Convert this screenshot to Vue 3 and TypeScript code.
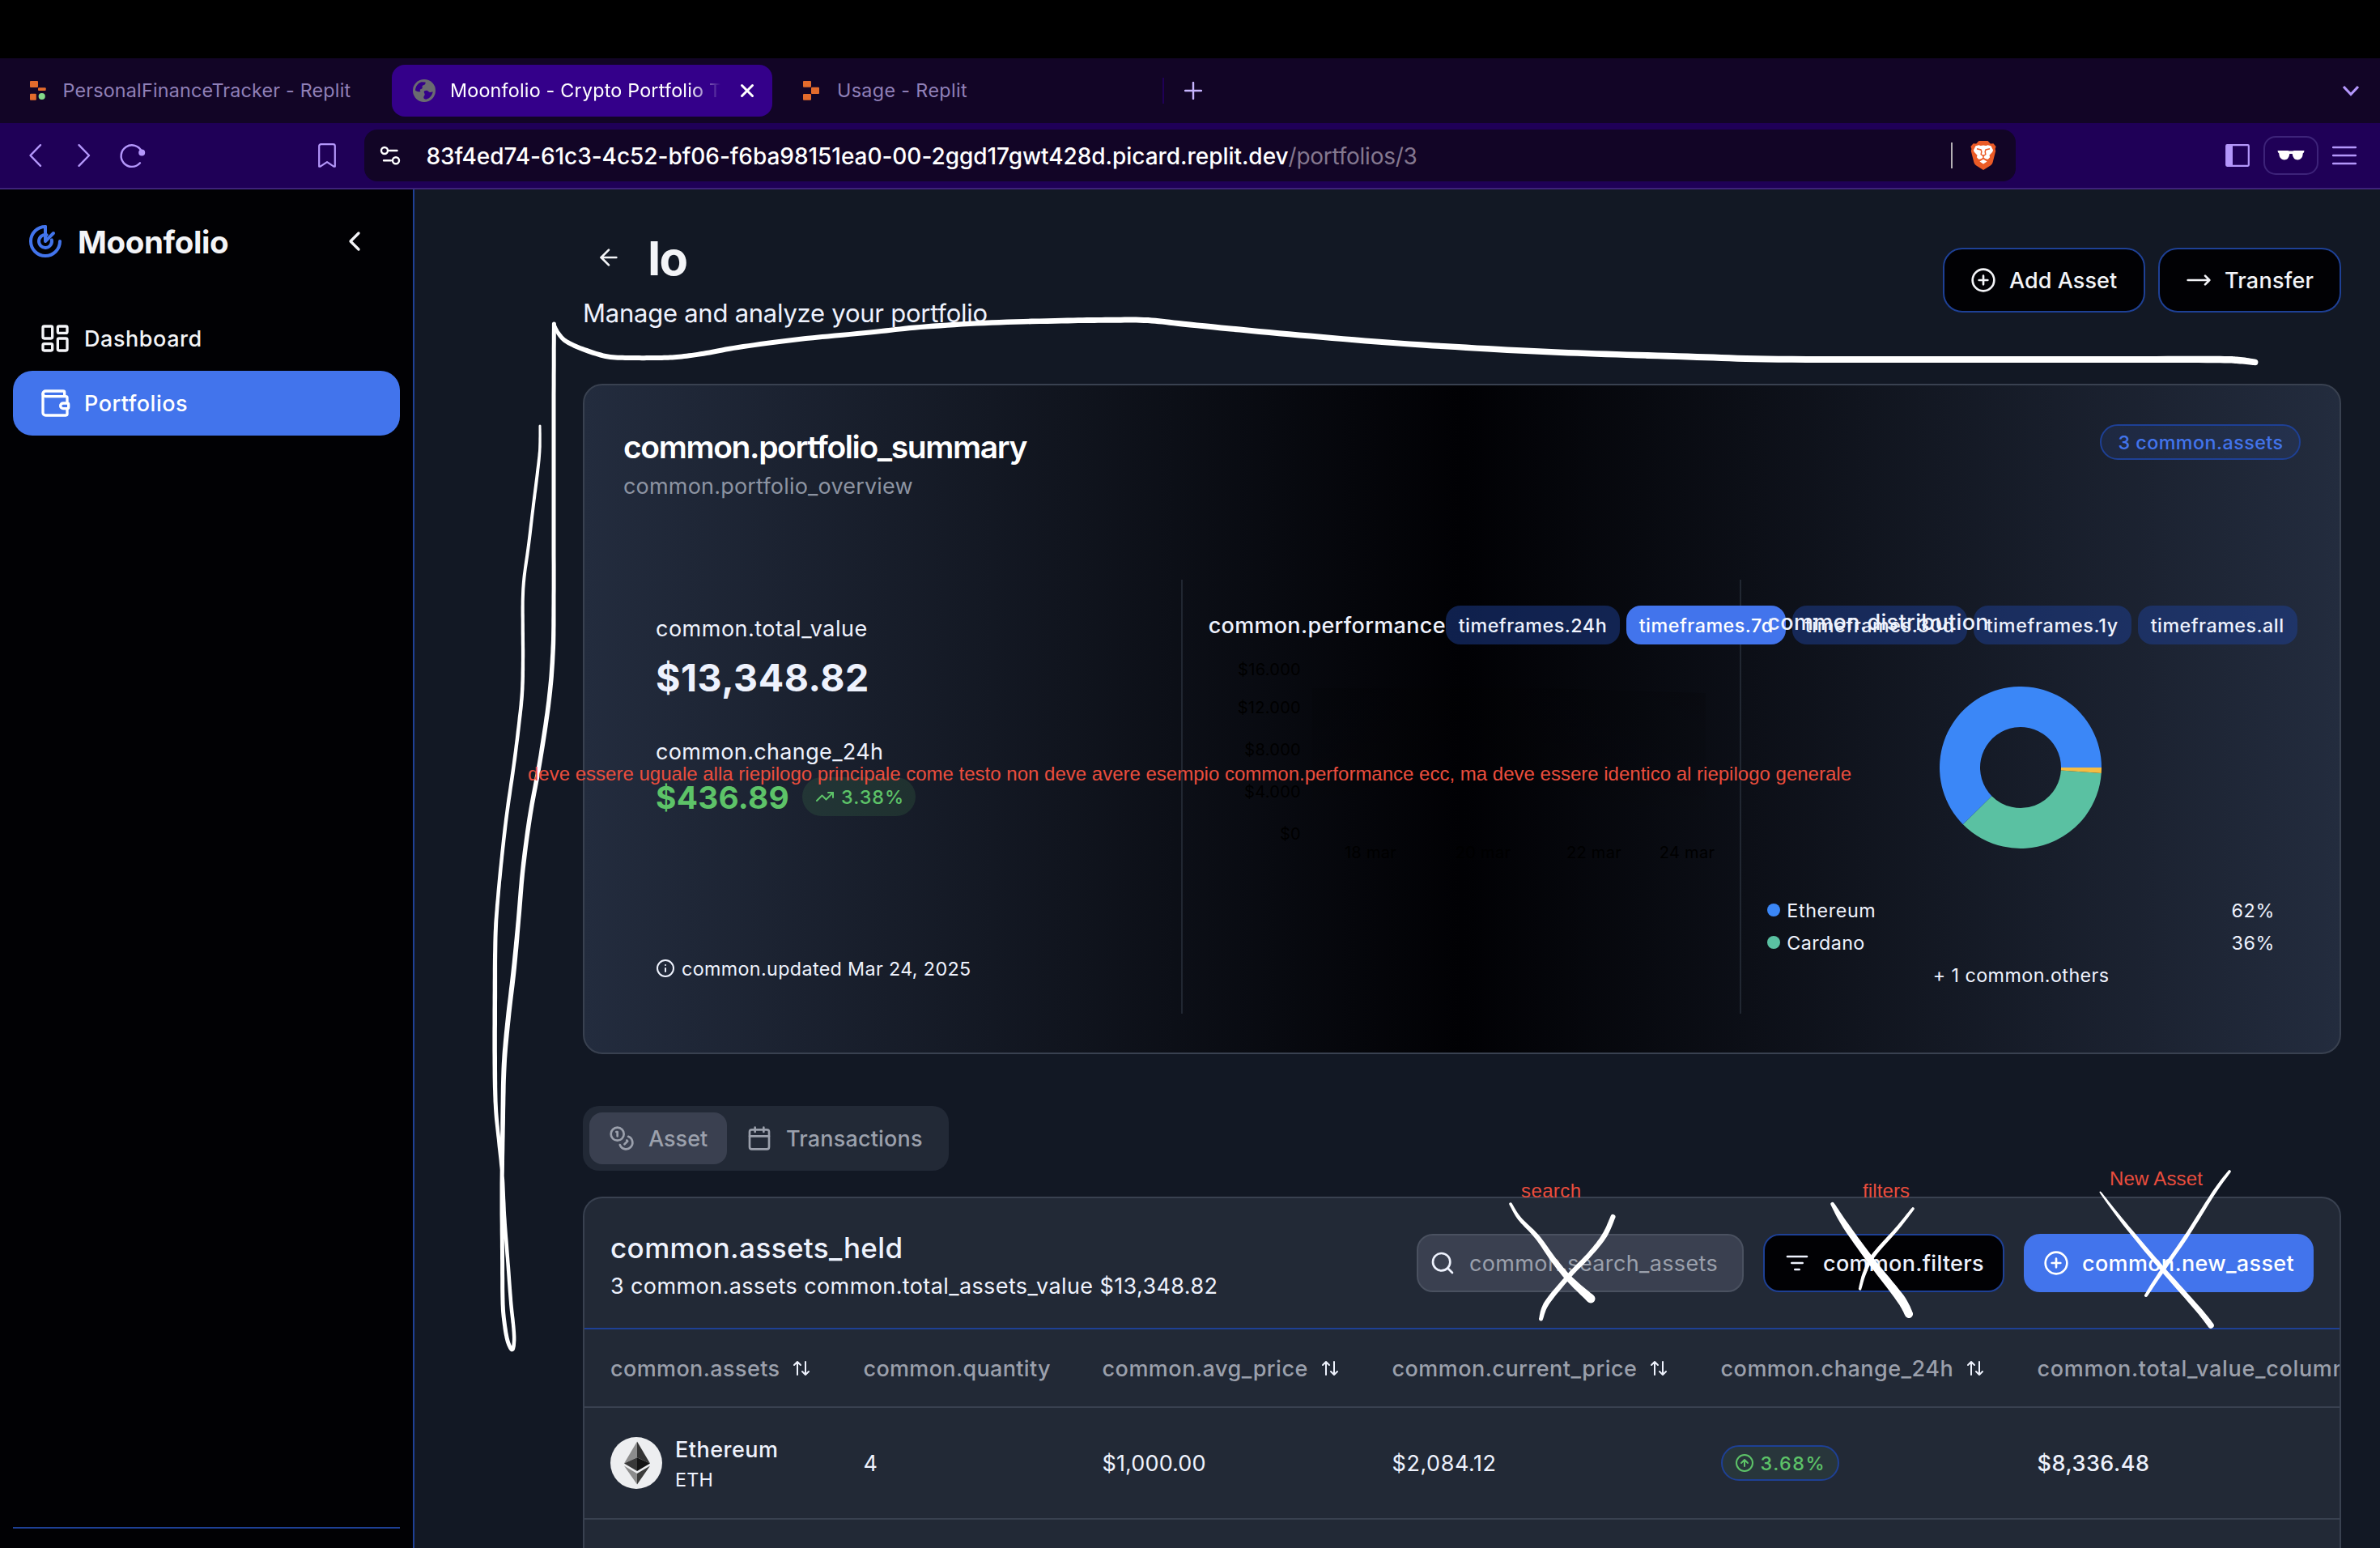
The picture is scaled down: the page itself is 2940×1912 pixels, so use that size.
<script setup lang="ts">
import type { Directive } from 'vue'

type StrokePoint = [x: number, y: number, width: number]

interface Slice {
  name: string
  share: number
  color: string
}

/* Tracks a line of text so that its glyphs span the given number of pixels. */
const vFit: Directive<HTMLElement, number> = {
  mounted(el, { value }) {
    const context = document.createElement('canvas').getContext('2d')
    const text = (el.textContent ?? '').trim()
    if (!context || text.length < 2) return
    const style = getComputedStyle(el)
    context.font = `${style.fontWeight} ${style.fontSize} ${style.fontFamily}`
    const box = context.measureText(text)
    const drawn = box.actualBoundingBoxLeft + box.actualBoundingBoxRight
    el.style.letterSpacing = `${((value - drawn) / (text.length - 1)).toFixed(3)}px`
  },
}

const timeframes = [
  { label: 'timeframes.24h', width: 215, text: 182, active: false },
  { label: 'timeframes.7d', width: 197, text: 164, active: true },
  { label: 'timeframes.30d', width: 216, text: 183, active: false },
  { label: 'timeframes.1y', width: 195, text: 162, active: false },
  { label: 'timeframes.all', width: 197, text: 163.5, active: false },
]

const valueTicks = [
  { label: '$16.000', y: 22 },
  { label: '$12.000', y: 69 },
  { label: '$8.000', y: 121 },
  { label: '$4.000', y: 173 },
  { label: '$0', y: 225 },
]
const dateTicks = [
  { label: '18 mar', x: 200 },
  { label: '20 mar', x: 339 },
  { label: '22 mar', x: 476 },
  { label: '24 mar', x: 591 },
]

const slices: Slice[] = [
  { name: 'Ethereum', share: 0.624, color: '#3b87f7' },
  { name: 'Cardano', share: 0.365, color: '#5ac1a2' },
  { name: 'Other', share: 0.011, color: '#f5bc42' },
]

/* Ring sectors, counter-clockwise from three o'clock. */
const sectors = slices.map((slice, i) => {
  const before = slices.slice(0, i).reduce((sum, s) => sum + s.share, 0)
  const from = before * Math.PI * 2
  const to = (before + slice.share) * Math.PI * 2
  const at = (r: number, a: number) =>
    `${(100 + r * Math.cos(a)).toFixed(2)} ${(100 - r * Math.sin(a)).toFixed(2)}`
  const large = to - from > Math.PI ? 1 : 0
  return {
    color: slice.color,
    d: `M${at(100, from)}A100 100 0 ${large} 0 ${at(100, to)}L${at(50, to)}A50 50 0 ${large} 1 ${at(50, from)}Z`,
  }
})

const legend = [
  { name: 'Ethereum', nameWidth: 106, share: '62%', color: '#3b87f7' },
  { name: 'Cardano', nameWidth: 94, share: '36%', color: '#5ac1a2' },
]

const columns = [
  { label: 'common.assets', width: 207.5, sortable: true },
  { label: 'common.quantity', width: 229.5, sortable: false },
  { label: 'common.avg_price', width: 252, sortable: true },
  { label: 'common.current_price', width: 300.5, sortable: true },
  { label: 'common.change_24h', width: 285, sortable: true },
  { label: 'common.total_value_column', width: 379, sortable: false },
]

/* Catmull-Rom resampling of a pen stroke, then an outline of varying width. */
function pen(points: StrokePoint[]): string {
  const line: StrokePoint[] = []
  const pick = (i: number) => points[Math.max(0, Math.min(points.length - 1, i))]
  for (let i = 0; i < points.length - 1; i++) {
    const [a, b, c, d] = [pick(i - 1), pick(i), pick(i + 1), pick(i + 2)]
    for (let k = 0; k < 10; k++) {
      const t = k / 10
      const mix = (n: 0 | 1 | 2) =>
        0.5 *
        (2 * b[n] +
          (c[n] - a[n]) * t +
          (2 * a[n] - 5 * b[n] + 4 * c[n] - d[n]) * t * t +
          (3 * b[n] - a[n] - 3 * c[n] + d[n]) * t * t * t)
      line.push([mix(0), mix(1), b[2] + (c[2] - b[2]) * t])
    }
  }
  line.push(points[points.length - 1])
  const left: string[] = []
  const right: string[] = []
  line.forEach(([x, y, w], i) => {
    const p = line[Math.max(0, i - 1)]
    const n = line[Math.min(line.length - 1, i + 1)]
    const length = Math.hypot(n[0] - p[0], n[1] - p[1]) || 1
    const nx = (-(n[1] - p[1]) / length) * (w / 2)
    const ny = ((n[0] - p[0]) / length) * (w / 2)
    left.push(`${(x + nx).toFixed(1)} ${(y + ny).toFixed(1)}`)
    right.unshift(`${(x - nx).toFixed(1)} ${(y - ny).toFixed(1)}`)
  })
  const endR = points[points.length - 1][2] / 2
  const startR = points[0][2] / 2
  return `M${left.join('L')}A${endR} ${endR} 0 0 0 ${right.join('L')}A${startR} ${startR} 0 0 0 ${left[0]}Z`
}

const penStrokes = [
  pen([
    [684, 400, 4], [690, 412, 5], [700, 422, 5.5], [722, 432, 6], [751, 440.5, 6], [781, 442, 6], [810, 442, 6],
    [836, 441, 6], [869, 436.7, 6], [912, 429, 6], [987, 419, 6], [1075, 410.5, 6], [1137, 404, 6.3], [1225, 398.5, 6.5],
    [1319, 396, 6.8], [1370, 395.3, 7], [1418, 395.6, 7], [1470, 401, 7], [1580, 411.7, 7], [1714, 423, 7], [1850, 431.5, 7.5],
    [1960, 436.5, 7.5], [2085, 440.5, 8], [2197, 443.7, 8], [2400, 444, 8], [2600, 444, 8], [2735, 444, 8.5], [2765, 445, 8.5], [2786, 447.5, 7.5],
  ]),
  pen([
    [684.4, 400, 5], [684, 500, 5], [684, 640, 5], [684, 745, 5], [683, 806, 5.5], [678, 866, 5.5], [667, 940, 5.5], [655, 1006, 5.5],
    [646, 1073, 5.5], [640.5, 1136, 5.5], [635, 1195, 6], [627, 1265, 6], [622.5, 1320, 6], [621, 1395, 5.5],
    [620, 1478, 5], [620.5, 1546, 5], [621, 1607, 5], [623, 1633, 5], [627, 1656, 5], [632.5, 1667, 5],
    [635, 1658, 4.5], [634.5, 1641, 4.5], [631, 1607, 4.5], [627, 1554, 4.5], [623, 1501, 4.5], [620.5, 1452, 4.5],
    [616, 1407, 4.5], [612.5, 1369, 5], [611.3, 1320, 5.5], [611.3, 1240, 5.5], [612, 1158, 5], [615, 1110, 4.5], [620, 1058, 4.5],
    [626, 1006, 4.5], [635, 943, 4.5], [641, 895, 4.5], [645, 855, 4.5], [646, 815, 4.3], [645.8, 775, 4.2], [645.8, 740, 4], [647.5, 713, 4],
    [653, 673, 4], [659, 623, 4], [664, 583, 4], [666.8, 555, 3.5], [667, 526, 3],
  ]),
  pen([[1866, 1487, 3.5], [1877, 1505, 4.5], [1899, 1528, 6], [1919, 1556, 7], [1939, 1580, 8], [1965, 1604, 11]]),
  pen([[1992.5, 1503, 6], [1982, 1526, 6.5], [1964, 1549, 6], [1939, 1575, 6], [1911, 1609, 6.5], [1903.5, 1629, 5]]),
  pen([[2263.5, 1487, 4.5], [2280, 1514, 8], [2311, 1557, 9], [2347, 1603, 11], [2358, 1623, 10]]),
  pen([[2363, 1493, 3.5], [2343, 1518, 4.5], [2314, 1551, 5], [2303, 1573, 4.5], [2297.6, 1592, 3.5]]),
  pen([[2594.5, 1472.5, 2], [2624, 1511, 4.5], [2671, 1567, 6], [2716, 1618, 7], [2731, 1637, 7.5]]),
  pen([[2754, 1447, 3.5], [2735.5, 1472, 4.5], [2700, 1528, 5], [2668.6, 1573, 5], [2651, 1600, 4]]),
]
</script>

<template>
  <div class="screen">
    <div class="menubar"></div>

    <div class="tabstrip">
      <div class="tab tab-first">
        <svg class="favicon" width="28" height="28" viewBox="0 0 28 28">
          <rect x="4" y="2" width="10" height="8" rx="1" fill="#e46b2c" />
          <rect x="14" y="10.2" width="9.7" height="3.8" rx="1" fill="#e46b2c" />
          <rect x="4" y="17.7" width="7.8" height="8" rx="1" fill="#e46b2c" />
          <circle cx="18.7" cy="21" r="4.1" fill="#84d98a" />
        </svg>
        <span v-fit="354">PersonalFinanceTracker - Replit</span>
      </div>
      <div class="tab tab-active">
        <svg class="favicon" width="28" height="28" viewBox="0 0 28 28">
          <circle cx="14" cy="14" r="14" fill="#6a6b70" />
          <path
            d="M3 13.5c.3-4.600 3-8.600 7.500-10.200l5 .2c.5 1.500-.2 2.800-1.800 3.600-2 .8-2.500 1.300-2 2.700.4 1.200-.4 2.200-2 2.400-1.200.2-1.200 1-.6 1.800.5.6.3 1.200-.6 1.300-2 .2-4.500-.5-5.500-1.800zM14 14.500c2-1.200 4.500-.8 5.500.8 1 1.300 3 .7 5.200 0-.8 4.700-4 8.300-8.200 9.400-2-.2-3.400-1-3.200-2.800.2-1.500 1.500-2 1.400-3.400-.1-1.400-1.700-2.600-.7-4z"
            fill="#34008a"
          />
        </svg>
        <div class="tab-title"><span v-fit="332">Moonfolio - Crypto Portfolio T</span></div>
        <svg class="close" width="18" height="18" viewBox="0 0 18 18">
          <path d="M2.500 2.500l13 13M15.500 2.500l-13 13" stroke="#fff" stroke-width="3" stroke-linecap="round" />
        </svg>
      </div>
      <div class="tab tab-usage">
        <svg class="favicon" width="28" height="28" viewBox="0 0 28 28">
          <rect x="4" y="2" width="10" height="7.800" rx="1" fill="#e46b2c" />
          <rect x="14" y="9.800" width="10" height="8.200" rx="1" fill="#e46b2c" />
          <rect x="4" y="18" width="10" height="7.800" rx="1" fill="#e46b2c" />
        </svg>
        <span v-fit="159">Usage - Replit</span>
      </div>
      <div class="tab-divider"></div>
      <svg class="plus" width="22" height="22" viewBox="0 0 22 22">
        <path d="M11 1v20M1 11h20" stroke="#c7b5ff" stroke-width="2.400" stroke-linecap="round" />
      </svg>
      <svg class="tab-chevron" width="24" height="16" viewBox="0 0 24 16">
        <path d="M3 3l9 9.500L21 3" fill="none" stroke="#b497fb" stroke-width="3.200" />
      </svg>
    </div>

    <div class="toolbar">
      <svg class="nav-icons" width="190" height="32" viewBox="0 0 190 32" fill="none" stroke="#b497fb" stroke-width="2.400" stroke-linecap="round" stroke-linejoin="round">
        <path d="M18 3.200L5.500 16 18 28.800" />
        <path d="M65.500 3.200L78 16 65.500 28.800" />
        <path d="M141 25.300A13.300 13.300 0 1 1 143 11" />
        <circle cx="143.200" cy="12.600" r="2.800" fill="#b497fb" />
      </svg>
      <svg class="bookmark" width="24" height="32" viewBox="0 0 24 32">
        <path d="M2.200 4.500a2.300 2.300 0 0 1 2.300-2.300h15a2.300 2.300 0 0 1 2.300 2.300v25.200h-1.500L12 24.200l-8.300 5.500H2.200z" fill="none" stroke="#b497fb" stroke-width="2.200" stroke-linejoin="round" />
      </svg>
      <div class="address">
        <svg width="26" height="26" viewBox="0 0 26 26" fill="none" stroke="#fff" stroke-width="2.400" stroke-linecap="round">
          <circle cx="6" cy="7" r="4" />
          <path d="M12 7h9.500M5 19.200h9" />
          <circle cx="20" cy="19.200" r="4" />
        </svg>
        <div class="url">
          <span class="url-host" v-fit="1064">83f4ed74-61c3-4c52-bf06-f6ba98151ea0-00-2ggd17gwt428d.picard.replit.dev</span><span class="url-path" v-fit="158">/portfolios/3</span>
        </div>
        <div class="address-rule"></div>
        <svg class="shield" width="32" height="36" viewBox="0 0 32 36">
          <path d="M10.500 0h11l3.300 3.500 3.600-.3L31.600 7 30.600 10 31.200 12.500 27.500 27q-.6 2-2.400 3.300L16 36l-9.100-5.700Q5.100 29 4.500 27L.8 12.500 1.400 10 .4 7l3.200-3.800 3.600.3z" fill="#eb5b26" />
          <path d="M10.500 5.300l2.200.6 3.300-.5 3.300.5 2.200-.6 4 1 2.600 5.200-.9 2.300-3.700 4 .6 2.500-2.300 2.500-3-.3-2.800-1.700-2.800 1.700-3 .3-2.300-2.500.6-2.500-3.700-4-.9-2.300L6.500 6.300z" fill="#fff" />
          <path d="M8 9.800l5 1.200.8 2.200-.6 3.500 2.800 1.800 2.800-1.800-.6-3.500.8-2.200 5-1.200" fill="none" stroke="#eb5b26" stroke-width="1.500" />
          <path d="M16 18.500v3M12.500 23.500l3.500-2 3.500 2" fill="none" stroke="#eb5b26" stroke-width="1.500" />
          <path d="M16 22.800l4.600 2.600-4.600 3.200-4.600-3.200z" fill="#fff" />
        </svg>
      </div>
      <svg class="panel" width="30" height="28" viewBox="0 0 30 28">
        <rect x="1.200" y="1.200" width="27.600" height="25.600" rx="1" fill="none" stroke="#b497fb" stroke-width="2.200" />
        <rect x="1" y="1" width="8" height="26" fill="#b497fb" />
      </svg>
      <div class="private">
        <svg width="34" height="14" viewBox="0 0 34 14">
          <path d="M.5 1h12.500q4 1 8 0H33.500l-.6 2.500-1 .6q-.6 8.300-6.400 8.400-6 0-6.800-7.400h-3.400Q14.500 12.500 8.500 12.500 2.700 12.400 2.100 4.100l-1-.6z" fill="#fff" />
        </svg>
      </div>
      <svg class="burger" width="30" height="24" viewBox="0 0 30 24">
        <path d="M1 2h28M1 12h28M1 22h28" stroke="#b497fb" stroke-width="2.400" stroke-linecap="round" />
      </svg>
    </div>

    <div class="app">
      <aside class="sidebar">
        <div class="brand">
          <svg width="48" height="48" viewBox="0 0 24 24" fill="none" stroke="#4274ec" stroke-width="2" stroke-linecap="round" stroke-linejoin="round">
            <path d="M12 3a9 9 0 1 0 9 9" />
            <path d="M12.800 8.080a4 4 0 1 0 3.120 3.120" />
            <path d="M12 3v9l5-5" />
          </svg>
          <span class="brand-name" v-fit="184">Moonfolio</span>
          <svg class="icon collapse" width="40" height="40" viewBox="0 0 24 24"><path d="m15 18-6-6 6-6" /></svg>
        </div>
        <nav>
          <div class="nav-item">
            <svg class="icon" width="40" height="40" viewBox="0 0 24 24">
              <rect width="7" height="9" x="3" y="3" rx="1" />
              <rect width="7" height="5" x="14" y="3" rx="1" />
              <rect width="7" height="9" x="14" y="12" rx="1" />
              <rect width="7" height="5" x="3" y="16" rx="1" />
            </svg>
            <span v-fit="141.500">Dashboard</span>
          </div>
          <div class="nav-item selected">
            <svg class="icon" width="40" height="40" viewBox="0 0 24 24">
              <path d="M19 7V4a1 1 0 0 0-1-1H5a2 2 0 0 0 0 4h15a1 1 0 0 1 1 1v4h-3a2 2 0 0 0 0 4h3a1 1 0 0 0 1-1v-2a1 1 0 0 0-1-1" />
              <path d="M3 5v14a2 2 0 0 0 2 2h15a1 1 0 0 0 1-1v-4" />
            </svg>
            <span v-fit="125">Portfolios</span>
          </div>
        </nav>
        <div class="sidebar-rule"></div>
      </aside>

      <main>
        <header class="page-head">
          <div>
            <div class="title-row">
              <svg class="icon" width="32" height="32" viewBox="0 0 24 24"><path d="m12 19-7-7 7-7" /><path d="M19 12H5" /></svg>
              <h1 v-fit="45.500">Io</h1>
            </div>
            <p class="subtitle"><span v-fit="496.500">Manage and analyze your portfolio</span></p>
          </div>
          <div class="actions">
            <button class="outline add">
              <svg class="icon" width="32" height="32" viewBox="0 0 24 24"><circle cx="12" cy="12" r="10" /><path d="M8 12h8M12 8v8" /></svg>
              <span v-fit="133">Add Asset</span>
            </button>
            <button class="outline transfer">
              <svg class="icon" width="32" height="32" viewBox="0 0 24 24"><path d="M18 8l4 4-4 4M2 12h20" /></svg>
              <span v-fit="108.500">Transfer</span>
            </button>
          </div>
        </header>

        <section class="summary">
          <div class="summary-head">
            <div>
              <h2><span v-fit="498.500">common.portfolio_summary</span></h2>
              <p><span v-fit="356.500">common.portfolio_overview</span></p>
            </div>
            <div class="asset-count"><span v-fit="202">3 common.assets</span></div>
          </div>

          <div class="summary-body">
            <div class="col totals">
              <p class="label"><span v-fit="259.500">common.total_value</span></p>
              <p class="total"><span v-fit="260">$13,348.82</span></p>
              <p class="label change-label"><span v-fit="278">common.change_24h</span></p>
              <div class="change">
                <span class="change-value" v-fit="162.500">$436.89</span>
                <div class="change-pill">
                  <svg class="icon" width="24" height="24" viewBox="0 0 24 24"><path d="M22 7l-8.500 8.500-5-5L2 17" /><path d="M16 7h6v6" /></svg>
                  <span v-fit="74">3.38%</span>
                </div>
              </div>
              <p class="updated">
                <svg class="icon" width="24" height="24" viewBox="0 0 24 24"><circle cx="12" cy="12" r="10" /><path d="M12 16v-4M12 8h.01" /></svg>
                <span v-fit="355">common.updated Mar 24, 2025</span>
              </p>
            </div>

            <div class="col performance">
              <div class="performance-head">
                <span class="col-title" v-fit="291">common.performance</span>
                <div
                  v-for="frame in timeframes"
                  :key="frame.label"
                  class="frame"
                  :class="{ active: frame.active }"
                  :style="{ width: frame.width + 'px' }"
                ><span v-fit="frame.text">{{ frame.label }}</span></div>
              </div>
              <svg class="chart" width="626" height="260" viewBox="0 0 626 260">
                <defs>
                  <linearGradient id="area" x1="0" y1="0" x2="0" y2="1">
                    <stop offset="0" stop-color="#000" stop-opacity=".16" />
                    <stop offset="1" stop-color="#000" stop-opacity="0" />
                  </linearGradient>
                </defs>
                <path d="M128 38L420 38 614 44V218H128Z" fill="url(#area)" />
                <text v-for="tick in valueTicks" :key="tick.label" x="114" :y="tick.y" text-anchor="end">{{ tick.label }}</text>
                <text v-for="tick in dateTicks" :key="tick.label" :x="tick.x" y="248" text-anchor="middle">{{ tick.label }}</text>
              </svg>
            </div>

            <div class="col distribution">
              <p class="col-title"><span v-fit="271">common.distribution</span></p>
              <svg class="donut" width="200" height="200" viewBox="0 0 200 200">
                <path v-for="sector in sectors" :key="sector.color" :d="sector.d" :fill="sector.color" />
              </svg>
              <div class="legend">
                <div v-for="entry in legend" :key="entry.name" class="legend-row">
                  <i :style="{ background: entry.color }"></i>
                  <span v-fit="entry.nameWidth">{{ entry.name }}</span>
                  <span class="share" v-fit="50">{{ entry.share }}</span>
                </div>
                <div class="legend-row others"><span v-fit="215">+ 1 common.others</span></div>
              </div>
            </div>
          </div>
        </section>

        <div class="tabs">
          <div class="tabs-item on">
            <svg class="icon" width="32" height="32" viewBox="0 0 24 24">
              <circle cx="8" cy="8" r="6" />
              <path d="M18.090 10.370A6 6 0 1 1 10.340 18" />
              <path d="M7 6h1v4" />
              <path d="m16.710 13.880.7.710-2.820 2.820" />
            </svg>
            <span v-fit="73">Asset</span>
          </div>
          <div class="tabs-item">
            <svg class="icon" width="32" height="32" viewBox="0 0 24 24">
              <path d="M8 2v4M16 2v4M3 10h18" />
              <rect width="18" height="18" x="3" y="4" rx="2" />
            </svg>
            <span v-fit="167">Transactions</span>
          </div>
        </div>

        <section class="assets">
          <div class="assets-head">
            <div class="assets-title">
              <h3><span v-fit="358.500">common.assets_held</span></h3>
              <p><span v-fit="747.500">3 common.assets common.total_assets_value $13,348.82</span></p>
            </div>
            <div class="field search">
              <svg class="icon" width="32" height="32" viewBox="0 0 24 24"><circle cx="11" cy="11" r="8" /><path d="m21 21-4.300-4.300" /></svg>
              <span v-fit="304.500">common.search_assets</span>
            </div>
            <div class="field filters">
              <svg class="icon" width="32" height="32" viewBox="0 0 24 24"><path d="M3 6h18M7 12h10M10 18h4" /></svg>
              <span v-fit="197">common.filters</span>
            </div>
            <div class="field create">
              <svg class="icon" width="32" height="32" viewBox="0 0 24 24"><circle cx="12" cy="12" r="10" /><path d="M8 12h8M12 8v8" /></svg>
              <span v-fit="260.500">common.new_asset</span>
            </div>
          </div>

          <div class="grid grid-head">
            <div v-for="column in columns" :key="column.label" class="cell">
              <span v-fit="column.width">{{ column.label }}</span>
              <svg v-if="column.sortable" class="icon sort" width="24" height="24" viewBox="0 0 24 24">
                <path d="m21 16-4 4-4-4M17 20V4M3 8l4-4 4 4M7 4v16" />
              </svg>
            </div>
          </div>
          <div class="grid grid-row">
            <div class="cell asset-cell">
              <svg class="coin" width="64" height="64" viewBox="0 0 64 64">
                <circle cx="32" cy="32" r="32" fill="#edeef0" />
                <path d="M33 5.500L17 32.500l16-7.300z" fill="#8c8c8c" />
                <path d="M33 5.500l16 27-16-7.300z" fill="#343434" />
                <path d="M33 25.200l-16 7.300 16 9.500z" fill="#393939" />
                <path d="M33 25.200l16 7.300-16 9.500z" fill="#141414" />
                <path d="M17 35.500L33 58.500V45z" fill="#8c8c8c" />
                <path d="M49 35.500L33 58.500V45z" fill="#3c3c3b" />
              </svg>
              <div class="coin-text">
                <p class="coin-name"><span v-fit="124">Ethereum</span></p>
                <p class="coin-code"><span v-fit="43.500">ETH</span></p>
              </div>
            </div>
            <div class="cell"><span>4</span></div>
            <div class="cell"><span v-fit="126">$1,000.00</span></div>
            <div class="cell"><span v-fit="126">$2,084.12</span></div>
            <div class="cell">
              <div class="gain">
                <svg class="icon" width="24" height="24" viewBox="0 0 24 24"><circle cx="12" cy="12" r="10" /><path d="m16 12-4-4-4 4M12 16V8" /></svg>
                <span v-fit="76">3.68%</span>
              </div>
            </div>
            <div class="cell worth"><span v-fit="136.500">$8,336.48</span></div>
          </div>
          <div class="grid-next"></div>
        </section>
      </main>
    </div>

    <!-- Reviewer's markup drawn over the page -->
    <svg class="markup" width="2940" height="1912" viewBox="0 0 2940 1912">
      <path v-for="(stroke, i) in penStrokes" :key="i" :d="stroke" fill="#fff" fill-rule="nonzero" />
      <g class="note">
        <text x="652" y="964" textLength="1635">deve essere uguale alla riepilogo principale come testo non deve avere esempio common.performance ecc, ma deve essere identico al riepilogo generale</text>
        <text x="1879" y="1479" textLength="74">search</text>
        <text x="2301" y="1479" textLength="58">filters</text>
        <text x="2606" y="1464" textLength="115">New Asset</text>
      </g>
    </svg>
  </div>
</template>

<style>
body {
  background: #121824;
}
</style>

<style scoped>
.screen {
  position: relative;
  width: 2940px;
  height: 1912px;
  overflow: hidden;
  display: flex;
  flex-direction: column;
  background: #121824;
  color: #eef2fd;
  font-family: Inter, "Liberation Sans", sans-serif;
  font-size: 27px;
  line-height: 40px;
  white-space: nowrap;
}
.screen * {
  box-sizing: border-box;
}
svg {
  display: block;
  flex: none;
}
p, h1, h2, h3 {
  margin: 0;
}
.icon {
  fill: none;
  stroke: currentColor;
  stroke-width: 2;
  stroke-linecap: round;
  stroke-linejoin: round;
}
/* Labels beside an icon sit slightly below its middle */
.app span {
  padding-top: 2px;
}

/* Browser window */
.menubar {
  flex: none;
  height: 72px;
  background: #000;
}
.tabstrip {
  flex: none;
  height: 80px;
  display: flex;
  align-items: center;
  background: #120526;
  color: #9080b8;
  font-size: 23.300px;
}
.tab {
  display: flex;
  align-items: center;
  height: 64px;
}
.tab-first {
  width: 484px;
  padding-left: 33px;
  gap: 16.500px;
}
.tab-active {
  width: 470px;
  padding: 0 22px 0 26px;
  border-radius: 16px;
  background: #34008a;
  color: #fff;
}
.tab-title {
  width: 334px;
  margin-left: 18px;
  overflow: hidden;
  mask-image: linear-gradient(to right, #000 296px, transparent 334px);
}
.close {
  margin-left: 24px;
}
.tab-usage {
  width: 482px;
  padding-left: 34px;
  gap: 18px;
}
.tab-divider {
  width: 2px;
  height: 32px;
  background: #1f0057;
}
.plus {
  margin-left: 25px;
}
.tab-chevron {
  margin-left: auto;
  margin-right: 24px;
}
.toolbar {
  flex: none;
  height: 82px;
  display: flex;
  align-items: center;
  background: #1f0057;
  border-bottom: 2px solid #3d2379;
}
.nav-icons {
  margin-left: 32px;
}
.bookmark {
  margin-left: 170px;
}
.address {
  width: 2040px;
  height: 64px;
  margin-left: 34px;
  padding-left: 19px;
  display: flex;
  align-items: center;
  border-radius: 16px;
  background: #120526;
}
.url {
  flex: 1;
  margin-left: 31.500px;
  padding-top: 1px;
  font-size: 28px;
}
.url-host {
  color: #fff;
  font-weight: 500;
}
.url-path {
  color: #84788f;
}
.address-rule {
  width: 2px;
  height: 32px;
  background: #b4b0b4;
}
.shield {
  margin: 0 24px 0 22px;
}
.panel {
  margin-left: 259px;
}
.private {
  width: 68px;
  height: 48px;
  margin-left: 17px;
  display: flex;
  align-items: center;
  justify-content: center;
  border: 2px solid #3d2379;
  border-radius: 15px;
}
.burger {
  margin-left: 17px;
}

/* Sidebar */
.app {
  flex: 1;
  min-height: 0;
  display: flex;
}
.sidebar {
  width: 512px;
  display: flex;
  flex-direction: column;
  padding: 32px 16px 24px;
  background: #010104;
  border-right: 2px solid #1e4095;
  color: #f3f4f7;
}
.brand {
  height: 64px;
  padding: 0 36px 0 16px;
  display: flex;
  align-items: center;
}
.brand-name {
  margin-left: 16px;
  font-size: 38.500px;
  font-weight: 650;
}
.collapse {
  margin-left: auto;
}
nav {
  margin-top: 48px;
}
.nav-item {
  height: 80px;
  padding-left: 32px;
  display: flex;
  align-items: center;
  gap: 16px;
  border-radius: 24px;
  font-weight: 450;
}
.selected {
  background: #4274ec;
  color: #fff;
}
.sidebar-rule {
  height: 2px;
  margin-top: auto;
  background: #1e4095;
}

/* Page */
main {
  flex: 1;
  min-width: 0;
  padding: 48px 48px 0 208px;
  display: flex;
  flex-direction: column;
}
.page-head {
  flex: none;
  height: 128px;
  display: flex;
  align-items: center;
  justify-content: space-between;
}
.title-row {
  height: 72px;
  padding-left: 16px;
  display: flex;
  align-items: center;
  gap: 32px;
  color: #f3f4f7;
}
h1 {
  padding-top: 2px;
  font-size: 58px;
  font-weight: 700;
}
.subtitle {
  margin-top: 9px;
  font-size: 31px;
  line-height: 48px;
}
.actions {
  display: flex;
  gap: 16px;
}
button {
  font: inherit;
  color: inherit;
}
.outline {
  height: 80px;
  padding: 0 0 0 32px;
  display: flex;
  align-items: center;
  gap: 16px;
  border: 2px solid #1e4095;
  border-radius: 24px;
  background: #010104;
  color: #f3f4f7;
  font-weight: 450;
}
.add {
  width: 250px;
}
.transfer {
  width: 226px;
}

/* Summary card */
.summary {
  flex: none;
  height: 828px;
  margin-top: 64px;
  padding: 0 48px 48px;
  display: flex;
  flex-direction: column;
  justify-content: space-between;
  border: 2px solid #394150;
  border-radius: 24px;
  background: linear-gradient(to right, #232c3e, #010104 50%, #232c3e) border-box;
}
.summary-head {
  padding-top: 48px;
  display: flex;
  justify-content: space-between;
  align-items: flex-start;
}
.summary-head h2 {
  margin-top: 4px;
  color: #fff;
  font-size: 39px;
  font-weight: 600;
  line-height: 48px;
}
.summary-head p {
  margin-top: 5px;
  color: #8d94a2;
}
.asset-count {
  width: 248px;
  height: 44px;
  padding-left: 20.500px;
  display: flex;
  align-items: center;
  border: 2px solid #1e4095;
  border-radius: 22px;
  background: rgba(66, 116, 236, 0.1);
  color: #4274ec;
  font-size: 23.300px;
  font-weight: 450;
}
.summary-body {
  height: 536px;
  display: grid;
  grid-template-columns: repeat(3, minmax(0, 1fr));
}
.col {
  display: flex;
  flex-direction: column;
}
.totals {
  padding: 41px 40px 39px;
  border-right: 2px solid rgba(75, 85, 99, 0.35);
}
.total {
  margin-top: 8px;
  font-size: 46.500px;
  font-weight: 650;
  line-height: 64px;
}
.change-label {
  margin-top: 40px;
}
.change {
  height: 48px;
  margin-top: 11px;
  display: flex;
  align-items: center;
  color: #5dc368;
}
.change-value {
  width: 181px;
  font-size: 38.800px;
  font-weight: 650;
}
.change-pill {
  width: 140px;
  height: 48px;
  padding-left: 16px;
  display: flex;
  align-items: center;
  gap: 8px;
  border-radius: 24px;
  background: rgba(93, 195, 104, 0.13);
  font-size: 23.300px;
  font-weight: 450;
}
.updated {
  margin-top: auto;
  display: flex;
  align-items: center;
  gap: 8px;
  font-size: 23.300px;
  line-height: 32px;
}
.performance {
  padding: 32px;
  border-right: 2px solid rgba(75, 85, 99, 0.35);
}
.performance-head {
  height: 48px;
  display: flex;
  align-items: center;
}
.col-title {
  flex: none;
  font-weight: 450;
}
.performance-head .col-title {
  width: 293px;
}
.frame {
  flex: none;
  height: 48px;
  margin-right: 8px;
  padding-left: 16px;
  display: flex;
  align-items: center;
  border-radius: 18px;
  background: rgba(30, 64, 149, 0.5);
  font-size: 23.300px;
  font-weight: 450;
}
.frame.active {
  background: #4274ec;
  color: #fff;
}
.chart {
  margin-top: 16px;
}
.chart text {
  fill: #000;
  font-size: 20px;
  letter-spacing: 0.300px;
}
.distribution {
  position: relative;
  padding: 33px 32px 31px;
}
.donut {
  align-self: center;
  margin: 59px 1px 0 0;
}
.legend {
  margin-top: auto;
  display: flex;
  flex-direction: column;
  gap: 6px;
  font-size: 23.300px;
  line-height: 32px;
}
.legend-row {
  display: flex;
  align-items: center;
}
.legend-row i {
  width: 16px;
  height: 16px;
  margin-right: 8px;
  border-radius: 50%;
}
.share {
  margin-left: auto;
}
.others {
  justify-content: center;
}

/* Section switch */
.tabs {
  flex: none;
  align-self: flex-start;
  width: 452px;
  height: 80px;
  margin-top: 64px;
  padding: 8px;
  display: flex;
  border-radius: 20px;
  background: #222936;
  color: #9ba0ac;
  font-weight: 450;
}
.tabs-item {
  width: 170px;
  height: 64px;
  padding-left: 24px;
  display: flex;
  align-items: center;
  gap: 17px;
}
.tabs-item.on {
  border-radius: 16px;
  background: #3a4050;
}

/* Asset table */
.assets {
  flex: 1;
  min-height: 0;
  margin-top: 32px;
  border: 2px solid #394150;
  border-bottom: 0;
  border-radius: 24px 24px 0 0;
  background: #222936;
  overflow: hidden;
}
.assets-head {
  height: 162px;
  padding: 0 32px;
  display: flex;
  align-items: center;
  gap: 24px;
  border-bottom: 2px solid #1e4095;
}
.assets-title {
  flex: 1;
  padding-top: 3px;
}
h3 {
  font-size: 35px;
  font-weight: 550;
  line-height: 54px;
}
.assets-title p {
  line-height: 42px;
}
.field {
  height: 72px;
  display: flex;
  align-items: center;
  gap: 16px;
  border: 2px solid #1e4095;
  border-radius: 20px;
  font-weight: 450;
}
.search {
  width: 404px;
  padding-left: 14px;
  border-color: #4a5160;
  background: #3a4050;
  gap: 17px;
  font-weight: 400;
}
.search span {
  color: #9ba0ac;
}
.filters {
  width: 298px;
  padding-left: 24px;
  background: #010104;
}
.create {
  width: 358px;
  padding-left: 22px;
  border-color: #4274ec;
  background: #4274ec;
  color: #fff;
}
.grid {
  display: grid;
  grid-template-columns: 312.500px 295px 358px 406px 391px minmax(0, 1fr);
  border-bottom: 2px solid #394150;
}
.cell {
  min-width: 0;
  padding-left: 32px;
  display: flex;
  align-items: center;
  gap: 15px;
}
.asset-cell {
  gap: 16px;
}
.grid-head {
  height: 97px;
  color: #9ba0ac;
  font-weight: 450;
}
.sort {
  color: #eef2fd;
}
.grid-row {
  height: 138px;
}
.coin-text {
  padding-top: 1px;
}
.coin-name {
  font-weight: 450;
}
.coin-code {
  font-size: 23.300px;
  line-height: 33px;
}
.gain {
  width: 146px;
  height: 44px;
  padding-left: 15px;
  display: flex;
  align-items: center;
  gap: 8px;
  border: 2px solid #1e4095;
  border-radius: 22px;
  background: #28363b;
  color: #5dc368;
  font-size: 23.300px;
  font-weight: 550;
}
.worth {
  font-weight: 450;
}
.grid-next {
  height: 138px;
}

.markup {
  position: absolute;
  left: 0;
  top: 0;
}
.note {
  fill: #ea4d3d;
  font-family: "Liberation Sans", Arial, sans-serif;
  font-size: 24px;
}
</style>
